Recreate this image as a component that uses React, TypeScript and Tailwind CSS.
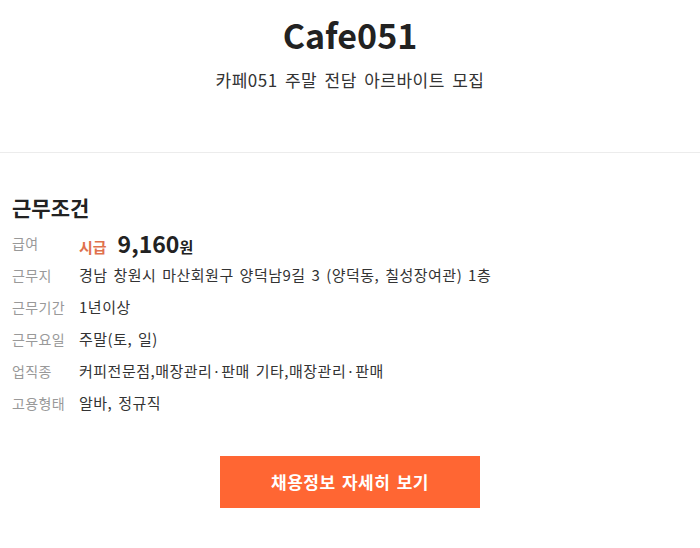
const rows: { label: string; value: string }[] = [
  { label: "근무지", value: "경남 창원시 마산회원구 양덕남9길 3 (양덕동, 칠성장여관) 1층" },
  { label: "근무기간", value: "1년이상" },
  { label: "근무요일", value: "주말(토, 일)" },
  { label: "업직종", value: "커피전문점,매장관리·판매 기타,매장관리·판매" },
  { label: "고용형태", value: "알바, 정규직" },
];

export default function App() {
  return (
    <div
      className="min-h-[548px] w-[700px] bg-white text-[#222]"
      style={{ fontFamily: '"Noto Sans CJK KR", "Noto Sans", sans-serif' }}
    >
      <header className="border-b border-[#ececec] pt-[12px] pb-[60px] text-center">
        <h1 className="text-[34px] leading-[46px] font-bold text-[#222]">Cafe051</h1>
        <p className="mt-[10px] text-[17px] leading-[24px] tracking-[0.5px] [word-spacing:3px] text-[#333]">
          카페051 주말 전담 아르바이트 모집
        </p>
      </header>

      <section className="px-[12px] pt-[40px]">
        <h2 className="text-[21px] leading-[28px] font-bold text-[#222]">근무조건</h2>
        <dl className="mt-[6px] flex flex-col">
          <div className="flex h-[32px] items-center">
            <dt className="w-[67px] text-[14px] tracking-[0.4px] text-[#999]">급여</dt>
            <dd className="flex items-baseline">
              <span className="text-[15px] font-bold text-[#e0714d]">시급</span>
              <span className="ml-[11px] text-[23px] font-bold text-[#222]">9,160</span>
              <span className="text-[15px] font-bold text-[#222]">원</span>
            </dd>
          </div>
          {rows.map((r) => (
            <div key={r.label} className="flex h-[32px] items-center">
              <dt className="w-[67px] text-[14px] tracking-[0.4px] text-[#999]">{r.label}</dt>
              <dd className="text-[15px] tracking-[0.5px] [word-spacing:2px] text-[#333]">{r.value}</dd>
            </div>
          ))}
        </dl>
      </section>

      <div className="mt-[37px] flex justify-center">
        <button className="h-[52px] w-[260px] bg-[#ff6633] text-[17px] font-bold tracking-[0.5px] [word-spacing:2px] text-white">
          채용정보 자세히 보기
        </button>
      </div>
    </div>
  );
}
